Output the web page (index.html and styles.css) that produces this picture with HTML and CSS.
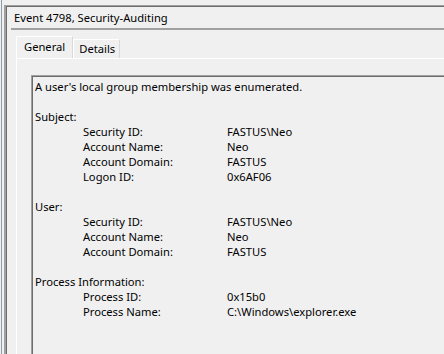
FILE: index.html
```html
<!DOCTYPE html>
<html>
<head>
<meta charset="utf-8">
<link rel="stylesheet" href="styles.css">
</head>
<body>
<div class="outer">
  <div class="pane">
    <div class="pane-inner">
      <div class="title"><span>Event 4798, Security-Auditing</span></div>
      <div class="tabs">
        <div class="tab active">General</div>
        <div class="tab">Details</div>
      </div>
      <div class="panel">
        <div class="box">
          <div class="msg">A user's local group membership was enumerated.</div>
          <div class="section">
            <div class="head">Subject:</div>
            <div class="fields">
              <span>Security ID:</span><span>FASTUS\Neo</span>
              <span>Account Name:</span><span>Neo</span>
              <span>Account Domain:</span><span>FASTUS</span>
              <span>Logon ID:</span><span>0x6AF06</span>
            </div>
          </div>
          <div class="section">
            <div class="head">User:</div>
            <div class="fields">
              <span>Security ID:</span><span>FASTUS\Neo</span>
              <span>Account Name:</span><span>Neo</span>
              <span>Account Domain:</span><span>FASTUS</span>
            </div>
          </div>
          <div class="section">
            <div class="head">Process Information:</div>
            <div class="fields">
              <span>Process ID:</span><span>0x15b0</span>
              <span>Process Name:</span><span>C:\Windows\explorer.exe</span>
            </div>
          </div>
        </div>
      </div>
    </div>
  </div>
</div>
</body>
</html>
```

FILE: styles.css
```css
html, body {
  margin: 0;
  padding: 0;
  background: #f0f0f0;
  overflow: hidden;
  width: 444px;
  height: 354px;
}
body {
  font-family: "Noto Sans", "Open Sans", sans-serif;
  font-size: 11.2px;
  color: #000;
}
.outer {
  margin-left: 1px;
  border-left: 1px solid #8c9cab;
  padding-left: 2px;
  height: 354px;
  box-sizing: border-box;
  overflow: hidden;
}
.pane {
  margin-top: 5px;
  border-left: 2px solid #a0a0a0;
  border-top: 1px solid #a0a0a0;
  height: 349px;
  box-sizing: border-box;
}
.pane-inner {
  border-left: 1px solid #6d6d6d;
  border-top: 1px solid #6d6d6d;
  height: 100%;
  box-sizing: border-box;
}
.title {
  margin-left: 4px;
  padding-left: 3px;
  height: 21px;
  line-height: 21px;
  border-bottom: 2px solid #a0a0a0;
}
.tabs {
  display: flex;
  align-items: flex-end;
  margin-top: 6px;
  margin-left: 9px;
  height: 22px;
}
.tab {
  box-sizing: border-box;
  border-left: 1px solid #fff;
  border-top: 1px solid #fff;
  border-right: 1px solid #d9d9d9;
  height: 19px;
  line-height: 18px;
  padding: 0 4px 0 5px;
}
.tab.active {
  height: 22px;
  line-height: 19px;
  padding: 0 7px 0 7px;
}
.panel {
  margin-left: 9px;
  border-left: 1px solid #fff;
  border-top: 1px solid #fff;
  padding: 16px 0 0 14px;
  height: 300px;
}
.box {
  border-left: 1px solid #a0a0a0;
  border-top: 1px solid #a0a0a0;
  box-shadow: inset 1px 1px 0 #6d6d6d;
  padding: 3px 0 0 3px;
  height: 300px;
  line-height: 15px;
}
.section {
  margin-top: 15px;
}
.fields {
  display: grid;
  grid-template-columns: 144px auto;
  padding-left: 48px;
}
```
